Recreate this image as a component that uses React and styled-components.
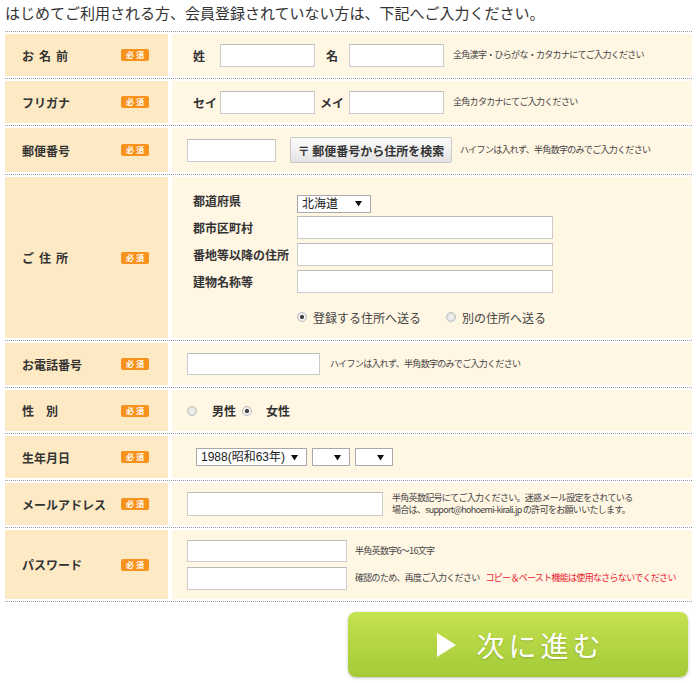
import React from "react";
import styled, { createGlobalStyle } from "styled-components";

const GlobalStyle = createGlobalStyle`
  body {
    margin: 0;
    background: #fff;
    font-family: "Noto Sans CJK JP", "Noto Sans", sans-serif;
    color: #333;
  }
  * { box-sizing: border-box; }
`;

const Page = styled.div`
  width: 700px;
  padding: 0 8px 0 5px;
`;

const Title = styled.h2`
  margin: 3px 0 8px 0;
  font-size: 15px;
  font-weight: normal;
  line-height: 20px;
  color: #333;
`;

const Table = styled.div`
  border-top: 1px dotted #999;
`;

const Row = styled.div`
  display: grid;
  grid-template-columns: 163px 1fr;
  column-gap: 4px;
  padding: 2px 0;
  border-bottom: 1px dotted #999;
`;

const LabelCell = styled.div`
  height: ${(p) => p.$h}px;
  background: #fde9c4;
  display: flex;
  align-items: center;
  justify-content: space-between;
  padding: 0 19px 0 17px;
  font-size: 12px;
  font-weight: bold;
  color: #333;
`;

const LabelText = styled.span`
  letter-spacing: ${(p) => p.$ls || 0}px;
`;

const Badge = styled.span`
  width: 28px;
  height: 12px;
  border-radius: 2px;
  background: #f7921c;
  color: #fff;
  font-size: 8px;
  font-weight: bold;
  line-height: 12px;
  text-align: center;
  letter-spacing: 2px;
  padding-left: 2px;
`;

const ValueCell = styled.div`
  background: #fff6e3;
  display: flex;
  align-items: ${(p) => p.$align || "center"};
  padding-left: ${(p) => p.$pl ?? 15}px;
  padding-top: ${(p) => p.$pt || 0}px;
`;

const FieldLabel = styled.span`
  width: ${(p) => p.$w}px;
  text-align: ${(p) => p.$align || "left"};
  font-size: 12px;
  font-weight: bold;
  color: #333;
  white-space: nowrap;
  flex-shrink: 0;
`;

const TextInput = styled.input`
  width: ${(p) => p.$w}px;
  height: ${(p) => p.$h || 23}px;
  border: 1px solid #ccc;
  border-top-color: #bbb;
  background: #fff;
  margin: 0 ${(p) => p.$mr || 0}px 0 0;
  padding: 0 4px;
  font-size: 12px;
  flex-shrink: 0;
`;

const Note = styled.span`
  font-size: 9px;
  letter-spacing: -0.7px;
  line-height: 12px;
  color: #444;
  white-space: nowrap;
`;

const Red = styled.span`
  color: #e8172d;
  margin-left: 6px;
`;

const ZipButton = styled.button`
  width: 162px;
  height: 26px;
  margin: 0 8px 0 14px;
  border: 1px solid #c8c8c8;
  border-radius: 2px;
  background: linear-gradient(#fbfbfb, #e4e4e4);
  font-family: inherit;
  font-size: 12px;
  font-weight: bold;
  color: #333;
  padding: 0;
`;

const AddressGrid = styled.div`
  display: grid;
  grid-template-columns: 104px 256px;
  grid-auto-rows: 23px;
  row-gap: 4px;
  align-items: center;
  padding-left: 6px;
`;

const RadioRow = styled.div`
  grid-column: 2;
  display: flex;
  align-items: center;
  margin-top: 17px;
  white-space: nowrap;
  font-size: 12px;
  color: #444;
`;

const Radio = styled.span`
  width: 10px;
  height: 10px;
  border-radius: 50%;
  border: 1px solid #bdbdbd;
  background: ${(p) =>
    p.$checked
      ? "radial-gradient(circle, #444 0 1.8px, #f4f4f4 2.4px, #dcdcdc 100%)"
      : "radial-gradient(circle, #f6f6f6 0, #d8d8d8 100%)"};
  margin-right: ${(p) => p.$mr ?? 6}px;
  flex-shrink: 0;
`;

const Choice = styled.span`
  margin-right: ${(p) => p.$mr || 0}px;
  font-weight: ${(p) => (p.$bold ? "bold" : "normal")};
  color: ${(p) => (p.$bold ? "#333" : "#444")};
  font-size: 12px;
  white-space: nowrap;
`;

const SelectWrap = styled.span`
  position: relative;
  display: inline-block;
  width: ${(p) => p.$w}px;
  height: 18px;
  margin-right: ${(p) => p.$mr || 0}px;
  flex-shrink: 0;
`;

const NativeSelect = styled.select`
  appearance: none;
  display: block;
  width: 100%;
  height: 100%;
  border: 1px solid #a9a9a9;
  border-radius: 0;
  background: #fff;
  font-family: "Liberation Sans", "Noto Sans CJK JP", sans-serif;
  font-size: 12px;
  color: #222;
  padding: 0 0 0 4px;
  line-height: 16px;
`;

const Arrow = styled.span`
  position: absolute;
  right: 9px;
  top: 0;
  bottom: 0;
  display: flex;
  align-items: center;
  pointer-events: none;
`;

const Stack = styled.div`
  display: flex;
  flex-direction: column;
  gap: ${(p) => p.$gap || 0}px;
`;

const Line = styled.div`
  display: flex;
  align-items: center;
`;

const Footer = styled.div`
  display: flex;
  justify-content: flex-end;
  padding: 10px 4px 6px 0;
`;

const NextButton = styled.button`
  width: 340px;
  height: 65px;
  border: none;
  border-radius: 8px;
  background: linear-gradient(#c6e251, #a3ca37);
  box-shadow: 0 1px 3px rgba(0, 0, 0, 0.25);
  display: flex;
  align-items: center;
  justify-content: center;
  gap: 20px;
  color: #fff;
  font-family: inherit;
  font-size: 28px;
  font-weight: normal;
  letter-spacing: 4px;
  text-shadow: 0 1px 2px rgba(80, 110, 0, 0.35);
  padding: 0 0 0 6px;
  cursor: pointer;
`;

const Select = ({ w, mr, value }) => (
  <SelectWrap $w={w} $mr={mr}>
    <NativeSelect defaultValue={value}>
      <option>{value}</option>
    </NativeSelect>
    <Arrow>
      <svg width="7" height="7" viewBox="0 0 7 7" aria-hidden="true">
        <path d="M0 1 L7 1 L3.5 6.5 Z" fill="#111" />
      </svg>
    </Arrow>
  </SelectWrap>
);

const Label = ({ h, ls, children }) => (
  <LabelCell $h={h}>
    <LabelText $ls={ls}>{children}</LabelText>
    <Badge>必須</Badge>
  </LabelCell>
);

export default function App() {
  return (
    <Page>
      <GlobalStyle />
      <Title>はじめてご利用される方、会員登録されていない方は、下記へご入力ください。</Title>
      <Table>
        <Row>
          <Label h={42} ls={5}>お名前</Label>
          <ValueCell $pl={21}>
            <FieldLabel $w={27}>姓</FieldLabel>
            <TextInput $w={95} />
            <FieldLabel $w={34} $align="center">名</FieldLabel>
            <TextInput $w={95} $mr={9} />
            <Note>全角漢字・ひらがな・カタカナにてご入力ください</Note>
          </ValueCell>
        </Row>
        <Row>
          <Label h={42}>フリガナ</Label>
          <ValueCell $pl={21}>
            <FieldLabel $w={27}>セイ</FieldLabel>
            <TextInput $w={95} />
            <FieldLabel $w={34} $align="center">メイ</FieldLabel>
            <TextInput $w={95} $mr={9} />
            <Note>全角カタカナにてご入力ください</Note>
          </ValueCell>
        </Row>
        <Row>
          <Label h={44}>郵便番号</Label>
          <ValueCell>
            <TextInput $w={89} />
            <ZipButton>〒 郵便番号から住所を検索</ZipButton>
            <Note>ハイフンは入れず、半角数字のみでご入力ください</Note>
          </ValueCell>
        </Row>
        <Row>
          <Label h={161} ls={5}>ご住所</Label>
          <ValueCell $align="flex-start" $pt={12}>
            <AddressGrid>
              <FieldLabel $w={104}>都道府県</FieldLabel>
              <span>
                <Select w={74} value="北海道" />
              </span>
              <FieldLabel $w={104}>郡市区町村</FieldLabel>
              <TextInput $w={256} />
              <FieldLabel $w={104}>番地等以降の住所</FieldLabel>
              <TextInput $w={256} />
              <FieldLabel $w={104}>建物名称等</FieldLabel>
              <TextInput $w={256} />
              <RadioRow>
                <Radio $checked />
                <Choice $mr={25}>登録する住所へ送る</Choice>
                <Radio />
                <Choice>別の住所へ送る</Choice>
              </RadioRow>
            </AddressGrid>
          </ValueCell>
        </Row>
        <Row>
          <Label h={42}>お電話番号</Label>
          <ValueCell>
            <TextInput $w={133} $h={22} $mr={10} />
            <Note>ハイフンは入れず、半角数字のみでご入力ください</Note>
          </ValueCell>
        </Row>
        <Row>
          <Label h={41}>性　別</Label>
          <ValueCell>
            <Radio $mr={15} />
            <Choice $bold $mr={6}>男性</Choice>
            <Radio $mr={14} $checked />
            <Choice $bold>女性</Choice>
          </ValueCell>
        </Row>
        <Row>
          <Label h={42}>生年月日</Label>
          <ValueCell $pl={24}>
            <Select w={111} mr={5} value="1988(昭和63年)" />
            <Select w={38} mr={5} value="" />
            <Select w={38} value="" />
          </ValueCell>
        </Row>
        <Row>
          <Label h={42}>メールアドレス</Label>
          <ValueCell>
            <TextInput $w={196} $h={24} $mr={9} />
            <Stack>
              <Note>半角英数記号にてご入力ください。迷惑メール設定をされている</Note>
              <Note>場合は、support@hohoemi-kirali.jp の許可をお願いいたします。</Note>
            </Stack>
          </ValueCell>
        </Row>
        <Row>
          <Label h={69}>パスワード</Label>
          <ValueCell>
            <Stack $gap={5}>
              <Line>
                <TextInput $w={160} $h={22} $mr={8} />
                <Note>半角英数字6～16文字</Note>
              </Line>
              <Line>
                <TextInput $w={160} $h={23} $mr={8} />
                <Note>
                  確認のため、再度ご入力ください
                  <Red>コピー＆ペースト機能は使用なさらないでください</Red>
                </Note>
              </Line>
            </Stack>
          </ValueCell>
        </Row>
      </Table>
      <Footer>
        <NextButton>
          <svg width="19" height="24" viewBox="0 0 19 24" aria-hidden="true">
            <path d="M0 0 L19 12 L0 24 Z" fill="#fff" />
          </svg>
          次に進む
        </NextButton>
      </Footer>
    </Page>
  );
}
